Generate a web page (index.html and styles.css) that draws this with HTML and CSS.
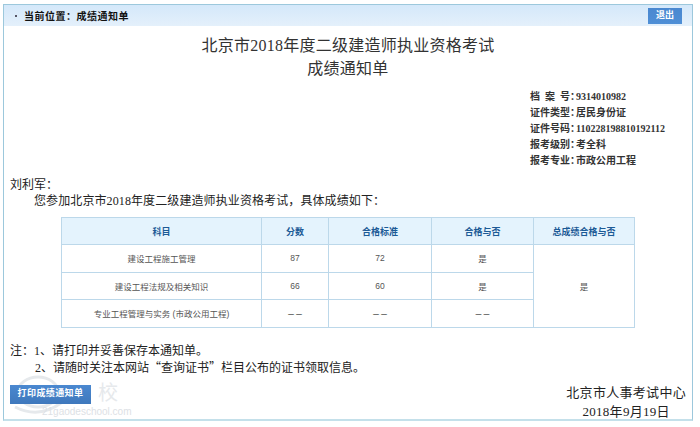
FILE: index.html
```html
<!DOCTYPE html>
<html lang="zh-CN">
<head>
    <meta charset="UTF-8">
    <title>成绩通知单</title>
    <link rel="stylesheet" href="styles.css">
</head>
<body>
    <div class="frame">
        <div class="top-bar">
            <div class="crumb"><span class="crumb-dot"></span>当前位置：成绩通知单</div>
            <a class="btn-exit">退出</a>
        </div>

        <h1 class="title">北京市2018年度二级建造师执业资格考试<br>成绩通知单</h1>

        <div class="info">
            <div class="info-row"><span class="info-label spaced">档 案 号：</span><span>9314010982</span></div>
            <div class="info-row"><span class="info-label">证件类型：</span><span>居民身份证</span></div>
            <div class="info-row"><span class="info-label">证件号码：</span><span>110228198810192112</span></div>
            <div class="info-row"><span class="info-label">报考级别：</span><span>考全科</span></div>
            <div class="info-row"><span class="info-label">报考专业：</span><span>市政公用工程</span></div>
        </div>

        <p class="name">刘利军：</p>
        <p class="intro">您参加北京市2018年度二级建造师执业资格考试，具体成绩如下：</p>

        <table class="score-table">
            <tr>
                <th class="col-subject">科目</th>
                <th class="col-score">分数</th>
                <th class="col-line">合格标准</th>
                <th class="col-pass">合格与否</th>
                <th class="col-total">总成绩合格与否</th>
            </tr>
            <tr>
                <td>建设工程施工管理</td>
                <td>87</td>
                <td>72</td>
                <td>是</td>
                <td rowspan="3">是</td>
            </tr>
            <tr>
                <td>建设工程法规及相关知识</td>
                <td>66</td>
                <td>60</td>
                <td>是</td>
            </tr>
            <tr>
                <td>专业工程管理与实务 (市政公用工程)</td>
                <td class="dash">－－</td>
                <td class="dash">－－</td>
                <td class="dash">－－</td>
            </tr>
        </table>

        <div class="notes">
            <p>注：1、请打印并妥善保存本通知单。</p>
            <p class="note-second">2、请随时关注本网站<span class="cjk">“</span>查询证书<span class="cjk">”</span>栏目公布的证书领取信息。</p>
        </div>

        <div class="bottom">
            <a class="btn-print">打印成绩通知单</a>
            <div class="issuer">
                <div class="issuer-name">北京市人事考试中心</div>
                <div class="issuer-date">2018年9月19日</div>
            </div>
        </div>

        <div class="watermark">
            <svg width="90" height="44" viewBox="0 0 90 44">
                <ellipse cx="26" cy="18" rx="20" ry="15" fill="none" stroke="#e6e9ec" stroke-width="3"/>
                <path d="M3 33 q24 12 46 -4" fill="none" stroke="#e6e9ec" stroke-width="3"/>
            </svg>
            <span class="watermark-char">校</span>
            <span class="watermark-text">21gaodeschool.com</span>
        </div>
    </div>
</body>
</html>
```

FILE: styles.css
```css
body {
    margin: 0;
    padding: 4px 7px 0 3px;
    background-color: #fff;
    color: #222;
    font-family: "Liberation Serif", "Noto Sans CJK SC", serif;
}

p {
    margin: 0;
}

.cjk {
    font-family: "Noto Sans CJK SC", sans-serif;
}

.frame {
    position: relative;
    height: 417px;
    box-sizing: border-box;
    border: 1px solid #9cc8dc;
    border-bottom: 2px solid #c4e0ea;
    display: flex;
    flex-direction: column;
}

.top-bar {
    height: 21px;
    flex: none;
    display: flex;
    align-items: center;
    justify-content: space-between;
    padding: 0 10px 0 8px;
    background: linear-gradient(#d4e8fa, #e4f0fb);
}

.crumb {
    display: flex;
    align-items: center;
    font-size: 10px;
    font-weight: bold;
    letter-spacing: 0.5px;
    color: #111;
}

.crumb-dot {
    width: 2px;
    height: 2px;
    margin: 0 7px 0 3px;
    background-color: #556;
}

.btn-exit {
    width: 34px;
    height: 16px;
    line-height: 15px;
    text-align: center;
    font-size: 9px;
    font-weight: bold;
    color: #fff;
    background: linear-gradient(#4a88d0, #4f8fd6);
}

.title {
    margin: 8px 0 0;
    text-align: center;
    font-size: 16px;
    line-height: 23px;
    font-weight: normal;
    letter-spacing: 0.25px;
    color: #333;
}

.info {
    align-self: flex-start;
    margin: 9px 0 0 526px;
    font-size: 10px;
    font-weight: bold;
    line-height: 16px;
    color: #333;
}

.info-row {
    display: flex;
    white-space: nowrap;
}

.info-label {
    width: 46px;
    flex: none;
    font-feature-settings: "halt";
}

.spaced {
    word-spacing: 2.5px;
}

.name {
    margin: 8px 0 0 6px;
    font-size: 12px;
    line-height: 16px;
    color: #222;
}

.intro {
    margin-left: 30px;
    font-size: 12px;
    line-height: 16px;
    letter-spacing: 0.1px;
    color: #222;
}

.score-table {
    flex: none;
    width: 573px;
    margin: 8px 0 0 57px;
    table-layout: fixed;
    border-collapse: collapse;
    font-family: "Liberation Sans", "Noto Sans CJK SC", sans-serif;
    font-size: 8.5px;
    color: #555;
}

.score-table th,
.score-table td {
    box-sizing: border-box;
    border: 1px solid #bcd8ea;
    padding: 0;
    text-align: center;
}

.score-table th {
    height: 27px;
    background-color: #e4f3fd;
    color: #1c5a96;
    font-size: 9px;
}

.score-table td {
    height: 27.5px;
}

.score-table td.dash {
    font-size: 8px;
    color: #222;
}

.col-subject { width: 200px; }
.col-score { width: 67px; }
.col-line { width: 103px; }
.col-pass { width: 102px; }
.col-total { width: 101px; }

.notes {
    margin: 15px 0 0 6px;
    font-size: 12px;
    line-height: 16px;
    color: #222;
}

.note-second {
    margin-left: 25px;
}

.bottom {
    display: flex;
    justify-content: space-between;
    align-items: flex-start;
    margin: 8px 6px 0 6px;
}

.btn-print {
    position: relative;
    z-index: 1;
    width: 81px;
    height: 19px;
    margin-top: 1px;
    line-height: 17px;
    text-align: center;
    font-size: 9px;
    letter-spacing: 0.4px;
    font-weight: bold;
    color: #fff;
    background: linear-gradient(#4a88d0, #3f78bc);
}

.issuer {
    margin-top: -1px;
    text-align: center;
    font-size: 13px;
    line-height: 19px;
    color: #222;
}

.issuer-name {
    letter-spacing: 0.3px;
}

.issuer-date {
    font-size: 13px;
    letter-spacing: 0.3px;
}

.watermark {
    position: absolute;
    left: 8px;
    bottom: 1px;
    width: 115px;
    height: 44px;
}

.watermark svg {
    display: block;
}

.watermark-char {
    position: absolute;
    left: 86px;
    top: 8px;
    font-family: "Noto Sans CJK SC", sans-serif;
    font-size: 20px;
    line-height: 20px;
    color: #e6e9ec;
}

.watermark-text {
    position: absolute;
    left: 30px;
    bottom: 0;
    font-family: "Liberation Sans", sans-serif;
    font-size: 10px;
    line-height: 12px;
    color: #dde1e5;
}
```
